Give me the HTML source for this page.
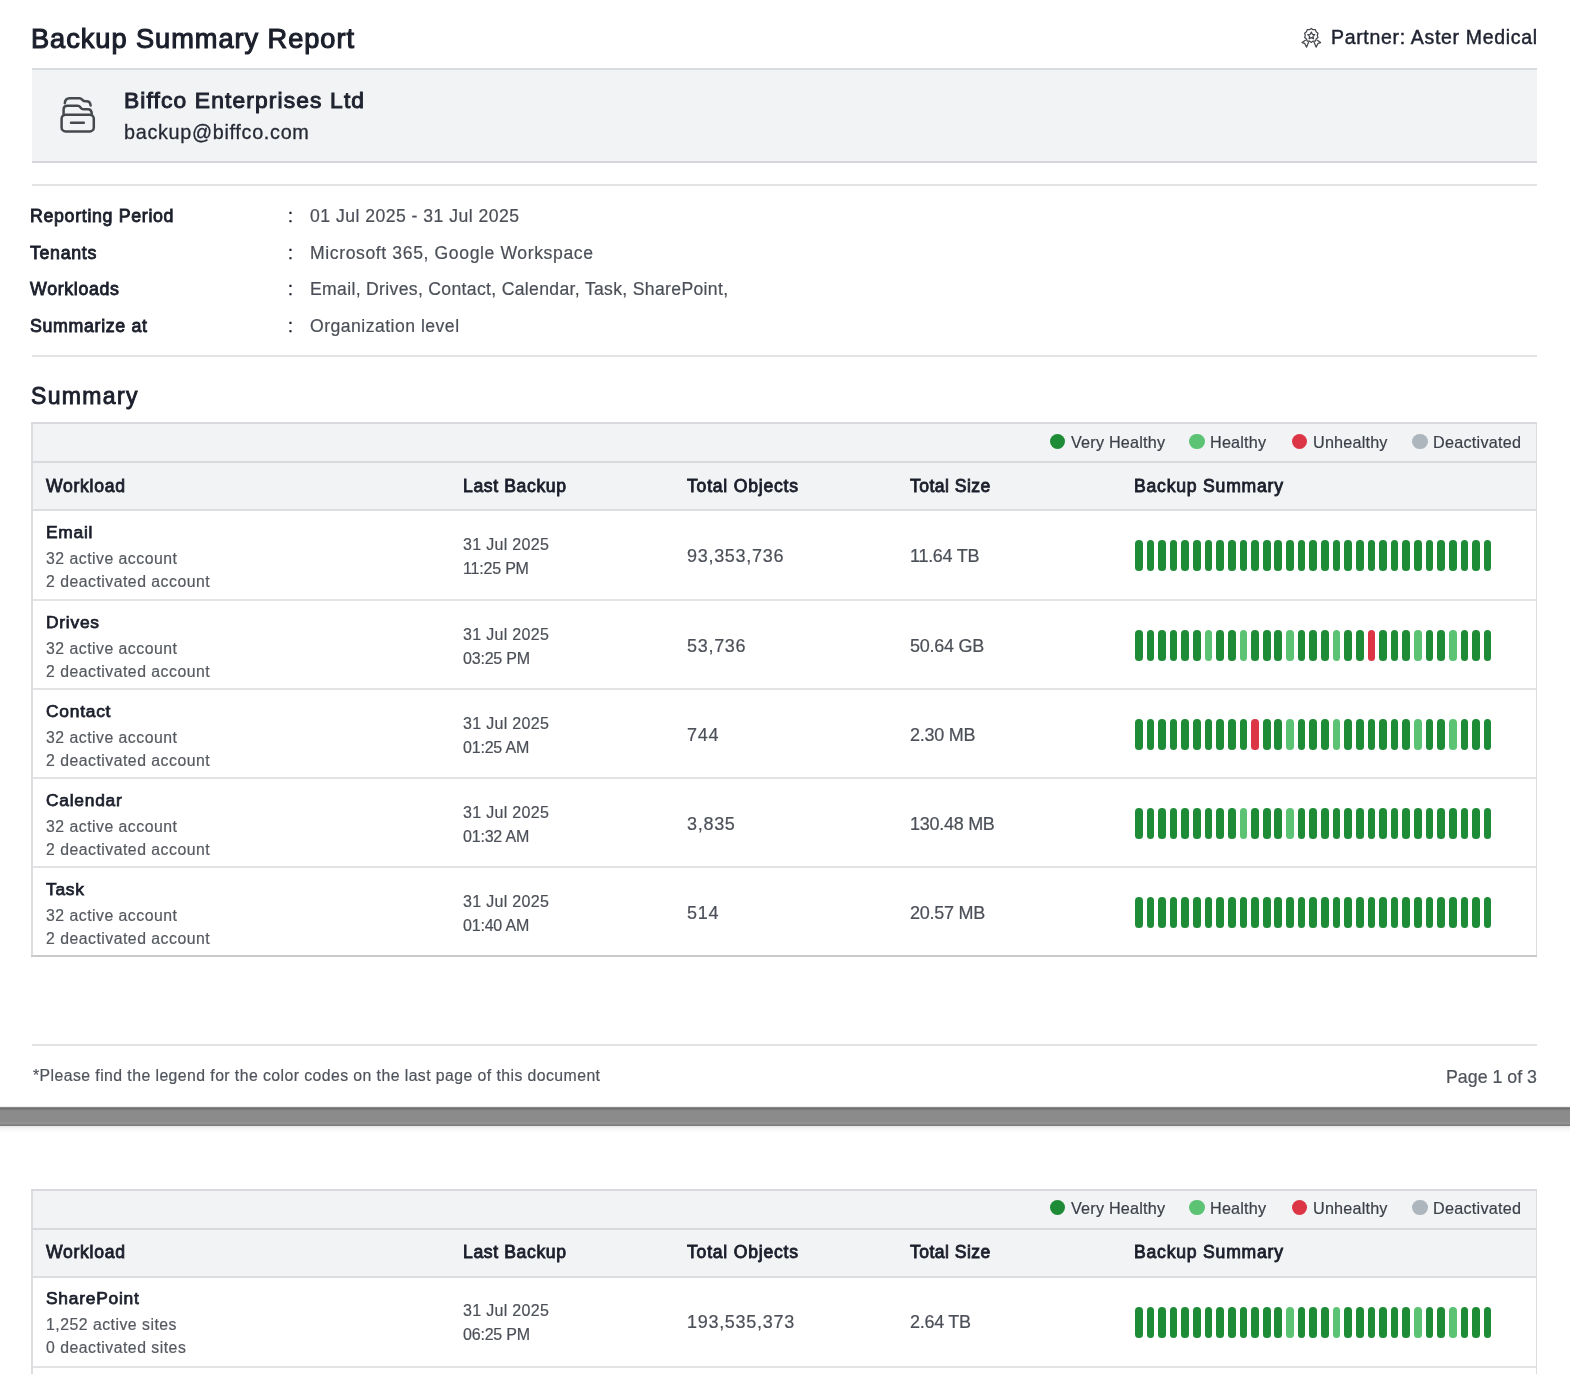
<!DOCTYPE html>
<html><head><meta charset="utf-8"><style>
html,body{margin:0;padding:0;background:#fff;width:1570px;height:1374px;overflow:hidden;position:relative;}
body{font-family:"Liberation Sans",sans-serif;}
.t{position:absolute;white-space:nowrap;will-change:transform;}
.bar{position:absolute;width:7.7px;height:30.5px;border-radius:3.85px;}
</style></head><body>
<div class="t" style="top:23px;font-size:27.20px;line-height:31px;color:#1b1f2b;letter-spacing:0.964px;-webkit-text-stroke:1.10px #1b1f2b;left:30.90px;">Backup Summary Report</div>
<svg style="position:absolute;left:1300px;top:26px" width="24" height="24" viewBox="0 0 24 24" fill="none" stroke="#45484d" stroke-width="1.25" stroke-linejoin="round" stroke-linecap="round">
<path d="M11.30 2.40 L13.15 3.69 L15.41 3.74 L16.15 5.87 L17.96 7.24 L17.30 9.40 L17.96 11.56 L16.15 12.93 L15.41 15.06 L13.15 15.11 L11.30 16.40 L9.45 15.11 L7.19 15.06 L6.45 12.93 L4.64 11.56 L5.30 9.40 L4.64 7.24 L6.45 5.87 L7.19 3.74 L9.45 3.69 Z"/><path d="M11.30 6.10 L12.36 8.34 L14.82 8.66 L13.01 10.36 L13.47 12.79 L11.30 11.60 L9.13 12.79 L9.59 10.36 L7.78 8.66 L10.24 8.34 Z"/>
<path d="M5.4 14.3 L2.1 16.6 L4.6 17.3 L6.6 21.1 L8.6 16.2"/>
<path d="M17.3 14.3 L20.6 16.6 L18.1 17.3 L16.1 21.1 L14.1 16.2"/>
</svg>
<div class="t" style="top:26px;font-size:19.50px;line-height:22px;color:#1f2330;letter-spacing:0.674px;-webkit-text-stroke:0.45px #1f2330;right:32.33px;">Partner: Aster Medical</div>
<div style="position:absolute;left:32.00px;top:68.00px;width:1505.00px;height:95.00px;background:#f2f3f5;border-top:2px solid #dadbde;border-bottom:2px solid #d6d7da;box-sizing:border-box;"></div>
<svg style="position:absolute;left:52px;top:88px" width="52" height="52" viewBox="0 0 52 52" fill="none" stroke="#45484d" stroke-width="2.5" stroke-linejoin="round" stroke-linecap="round">
<rect x="9.6" y="26.7" width="32.2" height="16.7" rx="4"/>
<path d="M11.6 26.5 V21.5 Q11.6 17.8 15.5 17.8 H25.5 Q27.3 17.8 28.4 19.3 L29.3 20.3 Q30.3 21.3 32 21.3 H36 Q39.6 21.3 39.8 26"/>
<path d="M12.8 15.2 Q13.2 10.2 17.5 10.2 H27.4 Q29 10.2 30 11.5 L30.8 12.3 Q31.8 13.2 33.4 13.2 H34.5 Q38.2 13.2 38.6 17.5"/>
<path d="M19 34.8 H31.8"/>
</svg>
<div class="t" style="top:87px;font-size:22.80px;line-height:26px;color:#1f2330;letter-spacing:1.133px;-webkit-text-stroke:1.00px #1f2330;left:123.90px;">Biffco Enterprises Ltd</div>
<div class="t" style="top:121px;font-size:19.80px;line-height:22px;color:#262a35;letter-spacing:0.697px;-webkit-text-stroke:0.30px #262a35;left:123.90px;">backup@biffco.com</div>
<div style="position:absolute;left:32.00px;top:184.00px;width:1505.00px;height:2.00px;background:#e3e3e5;"></div>
<div class="t" style="top:206px;font-size:17.80px;line-height:20px;color:#1b1f2b;letter-spacing:0.668px;-webkit-text-stroke:0.85px #1b1f2b;left:30.40px;">Reporting Period</div>
<div class="t" style="top:206px;font-size:17.80px;line-height:20px;color:#1b1f2b;letter-spacing:0.000px;-webkit-text-stroke:0.30px #1b1f2b;left:287.90px;">:</div>
<div class="t" style="top:206px;font-size:17.60px;line-height:20px;color:#4b4f57;letter-spacing:0.477px;-webkit-text-stroke:0.20px #4b4f57;left:309.70px;">01 Jul 2025 - 31 Jul 2025</div>
<div class="t" style="top:243px;font-size:17.80px;line-height:20px;color:#1b1f2b;letter-spacing:0.668px;-webkit-text-stroke:0.85px #1b1f2b;left:30.40px;">Tenants</div>
<div class="t" style="top:243px;font-size:17.80px;line-height:20px;color:#1b1f2b;letter-spacing:0.000px;-webkit-text-stroke:0.30px #1b1f2b;left:287.90px;">:</div>
<div class="t" style="top:243px;font-size:17.60px;line-height:20px;color:#4b4f57;letter-spacing:0.611px;-webkit-text-stroke:0.20px #4b4f57;left:309.70px;">Microsoft 365, Google Workspace</div>
<div class="t" style="top:279px;font-size:17.80px;line-height:20px;color:#1b1f2b;letter-spacing:0.668px;-webkit-text-stroke:0.85px #1b1f2b;left:30.40px;">Workloads</div>
<div class="t" style="top:279px;font-size:17.80px;line-height:20px;color:#1b1f2b;letter-spacing:0.000px;-webkit-text-stroke:0.30px #1b1f2b;left:287.90px;">:</div>
<div class="t" style="top:279px;font-size:17.60px;line-height:20px;color:#4b4f57;letter-spacing:0.329px;-webkit-text-stroke:0.20px #4b4f57;left:309.70px;">Email, Drives, Contact, Calendar, Task, SharePoint,</div>
<div class="t" style="top:316px;font-size:17.80px;line-height:20px;color:#1b1f2b;letter-spacing:0.668px;-webkit-text-stroke:0.85px #1b1f2b;left:30.40px;">Summarize at</div>
<div class="t" style="top:316px;font-size:17.80px;line-height:20px;color:#1b1f2b;letter-spacing:0.000px;-webkit-text-stroke:0.30px #1b1f2b;left:287.90px;">:</div>
<div class="t" style="top:316px;font-size:17.60px;line-height:20px;color:#4b4f57;letter-spacing:0.483px;-webkit-text-stroke:0.20px #4b4f57;left:309.70px;">Organization level</div>
<div style="position:absolute;left:32.00px;top:355.00px;width:1505.00px;height:1.50px;background:#e3e3e5;"></div>
<div class="t" style="top:383px;font-size:23.00px;line-height:26px;color:#1b1f2b;letter-spacing:1.349px;-webkit-text-stroke:0.90px #1b1f2b;left:30.60px;">Summary</div>
<div style="position:absolute;left:31.00px;top:422.00px;width:1506.00px;height:535.00px;background:#fff;"></div>
<div style="position:absolute;left:31.00px;top:422.00px;width:1.50px;height:535.00px;background:#dcdde0;"></div>
<div style="position:absolute;left:1535.50px;top:422.00px;width:1.50px;height:535.00px;background:#dcdde0;"></div>
<div style="position:absolute;left:32.50px;top:424.00px;width:1503.00px;height:85.00px;background:#f2f3f5;"></div>
<div style="position:absolute;left:31.00px;top:422.00px;width:1506.00px;height:2.00px;background:#d8d9dc;"></div>
<div style="position:absolute;left:31.00px;top:461.00px;width:1506.00px;height:2.00px;background:#d9dadd;"></div>
<div style="position:absolute;left:31.00px;top:509.00px;width:1506.00px;height:2.00px;background:#dcdde0;"></div>
<div style="position:absolute;left:1049.6px;top:433.6px;width:15.5px;height:15.5px;border-radius:50%;background:#1e8b36"></div>
<div class="t" style="top:433px;font-size:16.20px;line-height:18px;color:#3b3f48;letter-spacing:0.203px;-webkit-text-stroke:0.20px #3b3f48;left:1070.70px;">Very Healthy</div>
<div style="position:absolute;left:1189.2px;top:433.6px;width:15.5px;height:15.5px;border-radius:50%;background:#5cc374"></div>
<div class="t" style="top:433px;font-size:16.20px;line-height:18px;color:#3b3f48;letter-spacing:0.188px;-webkit-text-stroke:0.20px #3b3f48;left:1210.10px;">Healthy</div>
<div style="position:absolute;left:1291.9px;top:433.6px;width:15.5px;height:15.5px;border-radius:50%;background:#dc3545"></div>
<div class="t" style="top:433px;font-size:16.20px;line-height:18px;color:#3b3f48;letter-spacing:0.191px;-webkit-text-stroke:0.20px #3b3f48;left:1312.80px;">Unhealthy</div>
<div style="position:absolute;left:1412.1px;top:433.6px;width:15.5px;height:15.5px;border-radius:50%;background:#adb5bd"></div>
<div class="t" style="top:433px;font-size:16.20px;line-height:18px;color:#3b3f48;letter-spacing:0.253px;-webkit-text-stroke:0.20px #3b3f48;left:1432.90px;">Deactivated</div>
<div class="t" style="top:476px;font-size:17.60px;line-height:20px;color:#1b1f2b;letter-spacing:0.717px;-webkit-text-stroke:0.85px #1b1f2b;left:46.20px;">Workload</div>
<div class="t" style="top:476px;font-size:17.60px;line-height:20px;color:#1b1f2b;letter-spacing:0.619px;-webkit-text-stroke:0.85px #1b1f2b;left:463.10px;">Last Backup</div>
<div class="t" style="top:476px;font-size:17.60px;line-height:20px;color:#1b1f2b;letter-spacing:0.776px;-webkit-text-stroke:0.85px #1b1f2b;left:686.60px;">Total Objects</div>
<div class="t" style="top:476px;font-size:17.60px;line-height:20px;color:#1b1f2b;letter-spacing:0.459px;-webkit-text-stroke:0.85px #1b1f2b;left:910.30px;">Total Size</div>
<div class="t" style="top:476px;font-size:17.60px;line-height:20px;color:#1b1f2b;letter-spacing:0.782px;-webkit-text-stroke:0.85px #1b1f2b;left:1133.90px;">Backup Summary</div>
<div class="t" style="top:522px;font-size:17.40px;line-height:20px;color:#1b1f2b;letter-spacing:0.750px;-webkit-text-stroke:0.75px #1b1f2b;left:46.20px;">Email</div>
<div class="t" style="top:550px;font-size:15.80px;line-height:17px;color:#55595f;letter-spacing:0.497px;-webkit-text-stroke:0.20px #55595f;left:46.20px;">32 active account</div>
<div class="t" style="top:573px;font-size:15.80px;line-height:17px;color:#55595f;letter-spacing:0.497px;-webkit-text-stroke:0.20px #55595f;left:46.20px;">2 deactivated account</div>
<div class="t" style="top:536px;font-size:16.00px;line-height:17px;color:#4b4f57;letter-spacing:0.319px;-webkit-text-stroke:0.20px #4b4f57;left:463.40px;">31 Jul 2025</div>
<div class="t" style="top:560px;font-size:16.00px;line-height:17px;color:#4b4f57;letter-spacing:-0.192px;-webkit-text-stroke:0.20px #4b4f57;left:463.40px;">11:25 PM</div>
<div class="t" style="top:546px;font-size:18.00px;line-height:20px;color:#4b4f57;letter-spacing:0.708px;-webkit-text-stroke:0.20px #4b4f57;left:686.90px;">93,353,736</div>
<div class="t" style="top:546px;font-size:18.00px;line-height:20px;color:#4b4f57;letter-spacing:-0.272px;-webkit-text-stroke:0.20px #4b4f57;left:910.40px;">11.64 TB</div>
<div class="bar" style="left:1134.90px;top:540.00px;background:#1e8b36"></div>
<div class="bar" style="left:1146.53px;top:540.00px;background:#1e8b36"></div>
<div class="bar" style="left:1158.16px;top:540.00px;background:#1e8b36"></div>
<div class="bar" style="left:1169.79px;top:540.00px;background:#1e8b36"></div>
<div class="bar" style="left:1181.42px;top:540.00px;background:#1e8b36"></div>
<div class="bar" style="left:1193.05px;top:540.00px;background:#1e8b36"></div>
<div class="bar" style="left:1204.68px;top:540.00px;background:#1e8b36"></div>
<div class="bar" style="left:1216.31px;top:540.00px;background:#1e8b36"></div>
<div class="bar" style="left:1227.94px;top:540.00px;background:#1e8b36"></div>
<div class="bar" style="left:1239.57px;top:540.00px;background:#1e8b36"></div>
<div class="bar" style="left:1251.20px;top:540.00px;background:#1e8b36"></div>
<div class="bar" style="left:1262.83px;top:540.00px;background:#1e8b36"></div>
<div class="bar" style="left:1274.46px;top:540.00px;background:#1e8b36"></div>
<div class="bar" style="left:1286.09px;top:540.00px;background:#1e8b36"></div>
<div class="bar" style="left:1297.72px;top:540.00px;background:#1e8b36"></div>
<div class="bar" style="left:1309.35px;top:540.00px;background:#1e8b36"></div>
<div class="bar" style="left:1320.98px;top:540.00px;background:#1e8b36"></div>
<div class="bar" style="left:1332.61px;top:540.00px;background:#1e8b36"></div>
<div class="bar" style="left:1344.24px;top:540.00px;background:#1e8b36"></div>
<div class="bar" style="left:1355.87px;top:540.00px;background:#1e8b36"></div>
<div class="bar" style="left:1367.50px;top:540.00px;background:#1e8b36"></div>
<div class="bar" style="left:1379.13px;top:540.00px;background:#1e8b36"></div>
<div class="bar" style="left:1390.76px;top:540.00px;background:#1e8b36"></div>
<div class="bar" style="left:1402.39px;top:540.00px;background:#1e8b36"></div>
<div class="bar" style="left:1414.02px;top:540.00px;background:#1e8b36"></div>
<div class="bar" style="left:1425.65px;top:540.00px;background:#1e8b36"></div>
<div class="bar" style="left:1437.28px;top:540.00px;background:#1e8b36"></div>
<div class="bar" style="left:1448.91px;top:540.00px;background:#1e8b36"></div>
<div class="bar" style="left:1460.54px;top:540.00px;background:#1e8b36"></div>
<div class="bar" style="left:1472.17px;top:540.00px;background:#1e8b36"></div>
<div class="bar" style="left:1483.80px;top:540.00px;background:#1e8b36"></div>
<div style="position:absolute;left:32.50px;top:599.00px;width:1503.00px;height:2.00px;background:#e2e3e5;"></div>
<div class="t" style="top:612px;font-size:17.40px;line-height:20px;color:#1b1f2b;letter-spacing:0.750px;-webkit-text-stroke:0.75px #1b1f2b;left:46.20px;">Drives</div>
<div class="t" style="top:640px;font-size:15.80px;line-height:17px;color:#55595f;letter-spacing:0.497px;-webkit-text-stroke:0.20px #55595f;left:46.20px;">32 active account</div>
<div class="t" style="top:663px;font-size:15.80px;line-height:17px;color:#55595f;letter-spacing:0.497px;-webkit-text-stroke:0.20px #55595f;left:46.20px;">2 deactivated account</div>
<div class="t" style="top:626px;font-size:16.00px;line-height:17px;color:#4b4f57;letter-spacing:0.319px;-webkit-text-stroke:0.20px #4b4f57;left:463.40px;">31 Jul 2025</div>
<div class="t" style="top:650px;font-size:16.00px;line-height:17px;color:#4b4f57;letter-spacing:-0.192px;-webkit-text-stroke:0.20px #4b4f57;left:463.40px;">03:25 PM</div>
<div class="t" style="top:636px;font-size:18.00px;line-height:20px;color:#4b4f57;letter-spacing:0.708px;-webkit-text-stroke:0.20px #4b4f57;left:686.90px;">53,736</div>
<div class="t" style="top:636px;font-size:18.00px;line-height:20px;color:#4b4f57;letter-spacing:-0.272px;-webkit-text-stroke:0.20px #4b4f57;left:910.40px;">50.64 GB</div>
<div class="bar" style="left:1134.90px;top:630.00px;background:#1e8b36"></div>
<div class="bar" style="left:1146.53px;top:630.00px;background:#1e8b36"></div>
<div class="bar" style="left:1158.16px;top:630.00px;background:#1e8b36"></div>
<div class="bar" style="left:1169.79px;top:630.00px;background:#1e8b36"></div>
<div class="bar" style="left:1181.42px;top:630.00px;background:#1e8b36"></div>
<div class="bar" style="left:1193.05px;top:630.00px;background:#1e8b36"></div>
<div class="bar" style="left:1204.68px;top:630.00px;background:#5cc374"></div>
<div class="bar" style="left:1216.31px;top:630.00px;background:#1e8b36"></div>
<div class="bar" style="left:1227.94px;top:630.00px;background:#1e8b36"></div>
<div class="bar" style="left:1239.57px;top:630.00px;background:#5cc374"></div>
<div class="bar" style="left:1251.20px;top:630.00px;background:#1e8b36"></div>
<div class="bar" style="left:1262.83px;top:630.00px;background:#1e8b36"></div>
<div class="bar" style="left:1274.46px;top:630.00px;background:#1e8b36"></div>
<div class="bar" style="left:1286.09px;top:630.00px;background:#5cc374"></div>
<div class="bar" style="left:1297.72px;top:630.00px;background:#1e8b36"></div>
<div class="bar" style="left:1309.35px;top:630.00px;background:#1e8b36"></div>
<div class="bar" style="left:1320.98px;top:630.00px;background:#1e8b36"></div>
<div class="bar" style="left:1332.61px;top:630.00px;background:#5cc374"></div>
<div class="bar" style="left:1344.24px;top:630.00px;background:#1e8b36"></div>
<div class="bar" style="left:1355.87px;top:630.00px;background:#1e8b36"></div>
<div class="bar" style="left:1367.50px;top:630.00px;background:#dc3545"></div>
<div class="bar" style="left:1379.13px;top:630.00px;background:#1e8b36"></div>
<div class="bar" style="left:1390.76px;top:630.00px;background:#1e8b36"></div>
<div class="bar" style="left:1402.39px;top:630.00px;background:#1e8b36"></div>
<div class="bar" style="left:1414.02px;top:630.00px;background:#5cc374"></div>
<div class="bar" style="left:1425.65px;top:630.00px;background:#1e8b36"></div>
<div class="bar" style="left:1437.28px;top:630.00px;background:#1e8b36"></div>
<div class="bar" style="left:1448.91px;top:630.00px;background:#5cc374"></div>
<div class="bar" style="left:1460.54px;top:630.00px;background:#1e8b36"></div>
<div class="bar" style="left:1472.17px;top:630.00px;background:#1e8b36"></div>
<div class="bar" style="left:1483.80px;top:630.00px;background:#1e8b36"></div>
<div style="position:absolute;left:32.50px;top:688.00px;width:1503.00px;height:2.00px;background:#e2e3e5;"></div>
<div class="t" style="top:701px;font-size:17.40px;line-height:20px;color:#1b1f2b;letter-spacing:0.750px;-webkit-text-stroke:0.75px #1b1f2b;left:46.20px;">Contact</div>
<div class="t" style="top:729px;font-size:15.80px;line-height:17px;color:#55595f;letter-spacing:0.497px;-webkit-text-stroke:0.20px #55595f;left:46.20px;">32 active account</div>
<div class="t" style="top:752px;font-size:15.80px;line-height:17px;color:#55595f;letter-spacing:0.497px;-webkit-text-stroke:0.20px #55595f;left:46.20px;">2 deactivated account</div>
<div class="t" style="top:715px;font-size:16.00px;line-height:17px;color:#4b4f57;letter-spacing:0.319px;-webkit-text-stroke:0.20px #4b4f57;left:463.40px;">31 Jul 2025</div>
<div class="t" style="top:739px;font-size:16.00px;line-height:17px;color:#4b4f57;letter-spacing:-0.192px;-webkit-text-stroke:0.20px #4b4f57;left:463.40px;">01:25 AM</div>
<div class="t" style="top:725px;font-size:18.00px;line-height:20px;color:#4b4f57;letter-spacing:0.708px;-webkit-text-stroke:0.20px #4b4f57;left:686.90px;">744</div>
<div class="t" style="top:725px;font-size:18.00px;line-height:20px;color:#4b4f57;letter-spacing:-0.272px;-webkit-text-stroke:0.20px #4b4f57;left:910.40px;">2.30 MB</div>
<div class="bar" style="left:1134.90px;top:719.00px;background:#1e8b36"></div>
<div class="bar" style="left:1146.53px;top:719.00px;background:#1e8b36"></div>
<div class="bar" style="left:1158.16px;top:719.00px;background:#1e8b36"></div>
<div class="bar" style="left:1169.79px;top:719.00px;background:#1e8b36"></div>
<div class="bar" style="left:1181.42px;top:719.00px;background:#1e8b36"></div>
<div class="bar" style="left:1193.05px;top:719.00px;background:#1e8b36"></div>
<div class="bar" style="left:1204.68px;top:719.00px;background:#1e8b36"></div>
<div class="bar" style="left:1216.31px;top:719.00px;background:#1e8b36"></div>
<div class="bar" style="left:1227.94px;top:719.00px;background:#1e8b36"></div>
<div class="bar" style="left:1239.57px;top:719.00px;background:#1e8b36"></div>
<div class="bar" style="left:1251.20px;top:719.00px;background:#dc3545"></div>
<div class="bar" style="left:1262.83px;top:719.00px;background:#1e8b36"></div>
<div class="bar" style="left:1274.46px;top:719.00px;background:#1e8b36"></div>
<div class="bar" style="left:1286.09px;top:719.00px;background:#5cc374"></div>
<div class="bar" style="left:1297.72px;top:719.00px;background:#1e8b36"></div>
<div class="bar" style="left:1309.35px;top:719.00px;background:#1e8b36"></div>
<div class="bar" style="left:1320.98px;top:719.00px;background:#1e8b36"></div>
<div class="bar" style="left:1332.61px;top:719.00px;background:#5cc374"></div>
<div class="bar" style="left:1344.24px;top:719.00px;background:#1e8b36"></div>
<div class="bar" style="left:1355.87px;top:719.00px;background:#1e8b36"></div>
<div class="bar" style="left:1367.50px;top:719.00px;background:#1e8b36"></div>
<div class="bar" style="left:1379.13px;top:719.00px;background:#1e8b36"></div>
<div class="bar" style="left:1390.76px;top:719.00px;background:#1e8b36"></div>
<div class="bar" style="left:1402.39px;top:719.00px;background:#1e8b36"></div>
<div class="bar" style="left:1414.02px;top:719.00px;background:#5cc374"></div>
<div class="bar" style="left:1425.65px;top:719.00px;background:#1e8b36"></div>
<div class="bar" style="left:1437.28px;top:719.00px;background:#1e8b36"></div>
<div class="bar" style="left:1448.91px;top:719.00px;background:#5cc374"></div>
<div class="bar" style="left:1460.54px;top:719.00px;background:#1e8b36"></div>
<div class="bar" style="left:1472.17px;top:719.00px;background:#1e8b36"></div>
<div class="bar" style="left:1483.80px;top:719.00px;background:#1e8b36"></div>
<div style="position:absolute;left:32.50px;top:777.00px;width:1503.00px;height:2.00px;background:#e2e3e5;"></div>
<div class="t" style="top:790px;font-size:17.40px;line-height:20px;color:#1b1f2b;letter-spacing:0.750px;-webkit-text-stroke:0.75px #1b1f2b;left:46.20px;">Calendar</div>
<div class="t" style="top:818px;font-size:15.80px;line-height:17px;color:#55595f;letter-spacing:0.497px;-webkit-text-stroke:0.20px #55595f;left:46.20px;">32 active account</div>
<div class="t" style="top:841px;font-size:15.80px;line-height:17px;color:#55595f;letter-spacing:0.497px;-webkit-text-stroke:0.20px #55595f;left:46.20px;">2 deactivated account</div>
<div class="t" style="top:804px;font-size:16.00px;line-height:17px;color:#4b4f57;letter-spacing:0.319px;-webkit-text-stroke:0.20px #4b4f57;left:463.40px;">31 Jul 2025</div>
<div class="t" style="top:828px;font-size:16.00px;line-height:17px;color:#4b4f57;letter-spacing:-0.192px;-webkit-text-stroke:0.20px #4b4f57;left:463.40px;">01:32 AM</div>
<div class="t" style="top:814px;font-size:18.00px;line-height:20px;color:#4b4f57;letter-spacing:0.708px;-webkit-text-stroke:0.20px #4b4f57;left:686.90px;">3,835</div>
<div class="t" style="top:814px;font-size:18.00px;line-height:20px;color:#4b4f57;letter-spacing:-0.272px;-webkit-text-stroke:0.20px #4b4f57;left:910.40px;">130.48 MB</div>
<div class="bar" style="left:1134.90px;top:808.00px;background:#1e8b36"></div>
<div class="bar" style="left:1146.53px;top:808.00px;background:#1e8b36"></div>
<div class="bar" style="left:1158.16px;top:808.00px;background:#1e8b36"></div>
<div class="bar" style="left:1169.79px;top:808.00px;background:#1e8b36"></div>
<div class="bar" style="left:1181.42px;top:808.00px;background:#1e8b36"></div>
<div class="bar" style="left:1193.05px;top:808.00px;background:#1e8b36"></div>
<div class="bar" style="left:1204.68px;top:808.00px;background:#1e8b36"></div>
<div class="bar" style="left:1216.31px;top:808.00px;background:#1e8b36"></div>
<div class="bar" style="left:1227.94px;top:808.00px;background:#1e8b36"></div>
<div class="bar" style="left:1239.57px;top:808.00px;background:#5cc374"></div>
<div class="bar" style="left:1251.20px;top:808.00px;background:#1e8b36"></div>
<div class="bar" style="left:1262.83px;top:808.00px;background:#1e8b36"></div>
<div class="bar" style="left:1274.46px;top:808.00px;background:#1e8b36"></div>
<div class="bar" style="left:1286.09px;top:808.00px;background:#5cc374"></div>
<div class="bar" style="left:1297.72px;top:808.00px;background:#1e8b36"></div>
<div class="bar" style="left:1309.35px;top:808.00px;background:#1e8b36"></div>
<div class="bar" style="left:1320.98px;top:808.00px;background:#1e8b36"></div>
<div class="bar" style="left:1332.61px;top:808.00px;background:#1e8b36"></div>
<div class="bar" style="left:1344.24px;top:808.00px;background:#1e8b36"></div>
<div class="bar" style="left:1355.87px;top:808.00px;background:#1e8b36"></div>
<div class="bar" style="left:1367.50px;top:808.00px;background:#1e8b36"></div>
<div class="bar" style="left:1379.13px;top:808.00px;background:#1e8b36"></div>
<div class="bar" style="left:1390.76px;top:808.00px;background:#1e8b36"></div>
<div class="bar" style="left:1402.39px;top:808.00px;background:#1e8b36"></div>
<div class="bar" style="left:1414.02px;top:808.00px;background:#1e8b36"></div>
<div class="bar" style="left:1425.65px;top:808.00px;background:#1e8b36"></div>
<div class="bar" style="left:1437.28px;top:808.00px;background:#1e8b36"></div>
<div class="bar" style="left:1448.91px;top:808.00px;background:#1e8b36"></div>
<div class="bar" style="left:1460.54px;top:808.00px;background:#1e8b36"></div>
<div class="bar" style="left:1472.17px;top:808.00px;background:#1e8b36"></div>
<div class="bar" style="left:1483.80px;top:808.00px;background:#1e8b36"></div>
<div style="position:absolute;left:32.50px;top:866.00px;width:1503.00px;height:2.00px;background:#e2e3e5;"></div>
<div class="t" style="top:879px;font-size:17.40px;line-height:20px;color:#1b1f2b;letter-spacing:0.750px;-webkit-text-stroke:0.75px #1b1f2b;left:46.20px;">Task</div>
<div class="t" style="top:907px;font-size:15.80px;line-height:17px;color:#55595f;letter-spacing:0.497px;-webkit-text-stroke:0.20px #55595f;left:46.20px;">32 active account</div>
<div class="t" style="top:930px;font-size:15.80px;line-height:17px;color:#55595f;letter-spacing:0.497px;-webkit-text-stroke:0.20px #55595f;left:46.20px;">2 deactivated account</div>
<div class="t" style="top:893px;font-size:16.00px;line-height:17px;color:#4b4f57;letter-spacing:0.319px;-webkit-text-stroke:0.20px #4b4f57;left:463.40px;">31 Jul 2025</div>
<div class="t" style="top:917px;font-size:16.00px;line-height:17px;color:#4b4f57;letter-spacing:-0.192px;-webkit-text-stroke:0.20px #4b4f57;left:463.40px;">01:40 AM</div>
<div class="t" style="top:903px;font-size:18.00px;line-height:20px;color:#4b4f57;letter-spacing:0.708px;-webkit-text-stroke:0.20px #4b4f57;left:686.90px;">514</div>
<div class="t" style="top:903px;font-size:18.00px;line-height:20px;color:#4b4f57;letter-spacing:-0.272px;-webkit-text-stroke:0.20px #4b4f57;left:910.40px;">20.57 MB</div>
<div class="bar" style="left:1134.90px;top:897.00px;background:#1e8b36"></div>
<div class="bar" style="left:1146.53px;top:897.00px;background:#1e8b36"></div>
<div class="bar" style="left:1158.16px;top:897.00px;background:#1e8b36"></div>
<div class="bar" style="left:1169.79px;top:897.00px;background:#1e8b36"></div>
<div class="bar" style="left:1181.42px;top:897.00px;background:#1e8b36"></div>
<div class="bar" style="left:1193.05px;top:897.00px;background:#1e8b36"></div>
<div class="bar" style="left:1204.68px;top:897.00px;background:#1e8b36"></div>
<div class="bar" style="left:1216.31px;top:897.00px;background:#1e8b36"></div>
<div class="bar" style="left:1227.94px;top:897.00px;background:#1e8b36"></div>
<div class="bar" style="left:1239.57px;top:897.00px;background:#1e8b36"></div>
<div class="bar" style="left:1251.20px;top:897.00px;background:#1e8b36"></div>
<div class="bar" style="left:1262.83px;top:897.00px;background:#1e8b36"></div>
<div class="bar" style="left:1274.46px;top:897.00px;background:#1e8b36"></div>
<div class="bar" style="left:1286.09px;top:897.00px;background:#1e8b36"></div>
<div class="bar" style="left:1297.72px;top:897.00px;background:#1e8b36"></div>
<div class="bar" style="left:1309.35px;top:897.00px;background:#1e8b36"></div>
<div class="bar" style="left:1320.98px;top:897.00px;background:#1e8b36"></div>
<div class="bar" style="left:1332.61px;top:897.00px;background:#1e8b36"></div>
<div class="bar" style="left:1344.24px;top:897.00px;background:#1e8b36"></div>
<div class="bar" style="left:1355.87px;top:897.00px;background:#1e8b36"></div>
<div class="bar" style="left:1367.50px;top:897.00px;background:#1e8b36"></div>
<div class="bar" style="left:1379.13px;top:897.00px;background:#1e8b36"></div>
<div class="bar" style="left:1390.76px;top:897.00px;background:#1e8b36"></div>
<div class="bar" style="left:1402.39px;top:897.00px;background:#1e8b36"></div>
<div class="bar" style="left:1414.02px;top:897.00px;background:#1e8b36"></div>
<div class="bar" style="left:1425.65px;top:897.00px;background:#1e8b36"></div>
<div class="bar" style="left:1437.28px;top:897.00px;background:#1e8b36"></div>
<div class="bar" style="left:1448.91px;top:897.00px;background:#1e8b36"></div>
<div class="bar" style="left:1460.54px;top:897.00px;background:#1e8b36"></div>
<div class="bar" style="left:1472.17px;top:897.00px;background:#1e8b36"></div>
<div class="bar" style="left:1483.80px;top:897.00px;background:#1e8b36"></div>
<div style="position:absolute;left:31.00px;top:955.00px;width:1506.00px;height:2.00px;background:#c9cacc;"></div>
<div style="position:absolute;left:32.00px;top:1044.00px;width:1505.00px;height:2.00px;background:#e3e3e5;"></div>
<div class="t" style="top:1067px;font-size:15.80px;line-height:17px;color:#4f535b;letter-spacing:0.435px;-webkit-text-stroke:0.20px #4f535b;left:32.70px;">*Please find the legend for the color codes on the last page of this document</div>
<div class="t" style="top:1067px;font-size:17.80px;line-height:20px;color:#4f535b;letter-spacing:0.003px;-webkit-text-stroke:0.20px #4f535b;right:33.40px;">Page 1 of 3</div>
<div style="position:absolute;left:0;top:1106px;width:1570px;height:26px;background:linear-gradient(to bottom,#f0f0f0 0px,#f0f0f0 1px,#8a8a8a 1.5px,#6f6f6f 2.5px,#7e7e7e 3.5px,#8b8b8b 5px,#8b8b8b 16px,#989898 17px,#848484 18.5px,#7e7e7e 19.5px,#e8e8e8 20.5px,#f5f5f5 22px,#fcfcfc 26px);"></div>
<div style="position:absolute;left:31.00px;top:1189.00px;width:1506.00px;height:185.00px;background:#fff;"></div>
<div style="position:absolute;left:31.00px;top:1189.00px;width:1.50px;height:185.00px;background:#dcdde0;"></div>
<div style="position:absolute;left:1535.50px;top:1189.00px;width:1.50px;height:185.00px;background:#dcdde0;"></div>
<div style="position:absolute;left:32.50px;top:1191.00px;width:1503.00px;height:85.00px;background:#f2f3f5;"></div>
<div style="position:absolute;left:31.00px;top:1189.00px;width:1506.00px;height:2.00px;background:#d8d9dc;"></div>
<div style="position:absolute;left:31.00px;top:1228.00px;width:1506.00px;height:2.00px;background:#d9dadd;"></div>
<div style="position:absolute;left:31.00px;top:1276.00px;width:1506.00px;height:2.00px;background:#dcdde0;"></div>
<div style="position:absolute;left:1049.6px;top:1199.7px;width:15.5px;height:15.5px;border-radius:50%;background:#1e8b36"></div>
<div class="t" style="top:1199px;font-size:16.20px;line-height:18px;color:#3b3f48;letter-spacing:0.203px;-webkit-text-stroke:0.20px #3b3f48;left:1070.70px;">Very Healthy</div>
<div style="position:absolute;left:1189.2px;top:1199.7px;width:15.5px;height:15.5px;border-radius:50%;background:#5cc374"></div>
<div class="t" style="top:1199px;font-size:16.20px;line-height:18px;color:#3b3f48;letter-spacing:0.188px;-webkit-text-stroke:0.20px #3b3f48;left:1210.10px;">Healthy</div>
<div style="position:absolute;left:1291.9px;top:1199.7px;width:15.5px;height:15.5px;border-radius:50%;background:#dc3545"></div>
<div class="t" style="top:1199px;font-size:16.20px;line-height:18px;color:#3b3f48;letter-spacing:0.191px;-webkit-text-stroke:0.20px #3b3f48;left:1312.80px;">Unhealthy</div>
<div style="position:absolute;left:1412.1px;top:1199.7px;width:15.5px;height:15.5px;border-radius:50%;background:#adb5bd"></div>
<div class="t" style="top:1199px;font-size:16.20px;line-height:18px;color:#3b3f48;letter-spacing:0.253px;-webkit-text-stroke:0.20px #3b3f48;left:1432.90px;">Deactivated</div>
<div class="t" style="top:1242px;font-size:17.60px;line-height:20px;color:#1b1f2b;letter-spacing:0.717px;-webkit-text-stroke:0.85px #1b1f2b;left:46.20px;">Workload</div>
<div class="t" style="top:1242px;font-size:17.60px;line-height:20px;color:#1b1f2b;letter-spacing:0.619px;-webkit-text-stroke:0.85px #1b1f2b;left:463.10px;">Last Backup</div>
<div class="t" style="top:1242px;font-size:17.60px;line-height:20px;color:#1b1f2b;letter-spacing:0.776px;-webkit-text-stroke:0.85px #1b1f2b;left:686.60px;">Total Objects</div>
<div class="t" style="top:1242px;font-size:17.60px;line-height:20px;color:#1b1f2b;letter-spacing:0.459px;-webkit-text-stroke:0.85px #1b1f2b;left:910.30px;">Total Size</div>
<div class="t" style="top:1242px;font-size:17.60px;line-height:20px;color:#1b1f2b;letter-spacing:0.782px;-webkit-text-stroke:0.85px #1b1f2b;left:1133.90px;">Backup Summary</div>
<div class="t" style="top:1288px;font-size:17.40px;line-height:20px;color:#1b1f2b;letter-spacing:0.750px;-webkit-text-stroke:0.75px #1b1f2b;left:46.20px;">SharePoint</div>
<div class="t" style="top:1316px;font-size:15.80px;line-height:17px;color:#55595f;letter-spacing:0.497px;-webkit-text-stroke:0.20px #55595f;left:46.20px;">1,252 active sites</div>
<div class="t" style="top:1339px;font-size:15.80px;line-height:17px;color:#55595f;letter-spacing:0.497px;-webkit-text-stroke:0.20px #55595f;left:46.20px;">0 deactivated sites</div>
<div class="t" style="top:1302px;font-size:16.00px;line-height:17px;color:#4b4f57;letter-spacing:0.319px;-webkit-text-stroke:0.20px #4b4f57;left:463.40px;">31 Jul 2025</div>
<div class="t" style="top:1326px;font-size:16.00px;line-height:17px;color:#4b4f57;letter-spacing:-0.192px;-webkit-text-stroke:0.20px #4b4f57;left:463.40px;">06:25 PM</div>
<div class="t" style="top:1312px;font-size:18.00px;line-height:20px;color:#4b4f57;letter-spacing:0.708px;-webkit-text-stroke:0.20px #4b4f57;left:686.90px;">193,535,373</div>
<div class="t" style="top:1312px;font-size:18.00px;line-height:20px;color:#4b4f57;letter-spacing:-0.272px;-webkit-text-stroke:0.20px #4b4f57;left:910.40px;">2.64 TB</div>
<div class="bar" style="left:1134.90px;top:1307.00px;background:#1e8b36"></div>
<div class="bar" style="left:1146.53px;top:1307.00px;background:#1e8b36"></div>
<div class="bar" style="left:1158.16px;top:1307.00px;background:#1e8b36"></div>
<div class="bar" style="left:1169.79px;top:1307.00px;background:#1e8b36"></div>
<div class="bar" style="left:1181.42px;top:1307.00px;background:#1e8b36"></div>
<div class="bar" style="left:1193.05px;top:1307.00px;background:#1e8b36"></div>
<div class="bar" style="left:1204.68px;top:1307.00px;background:#1e8b36"></div>
<div class="bar" style="left:1216.31px;top:1307.00px;background:#1e8b36"></div>
<div class="bar" style="left:1227.94px;top:1307.00px;background:#1e8b36"></div>
<div class="bar" style="left:1239.57px;top:1307.00px;background:#1e8b36"></div>
<div class="bar" style="left:1251.20px;top:1307.00px;background:#1e8b36"></div>
<div class="bar" style="left:1262.83px;top:1307.00px;background:#1e8b36"></div>
<div class="bar" style="left:1274.46px;top:1307.00px;background:#1e8b36"></div>
<div class="bar" style="left:1286.09px;top:1307.00px;background:#5cc374"></div>
<div class="bar" style="left:1297.72px;top:1307.00px;background:#1e8b36"></div>
<div class="bar" style="left:1309.35px;top:1307.00px;background:#1e8b36"></div>
<div class="bar" style="left:1320.98px;top:1307.00px;background:#1e8b36"></div>
<div class="bar" style="left:1332.61px;top:1307.00px;background:#5cc374"></div>
<div class="bar" style="left:1344.24px;top:1307.00px;background:#1e8b36"></div>
<div class="bar" style="left:1355.87px;top:1307.00px;background:#1e8b36"></div>
<div class="bar" style="left:1367.50px;top:1307.00px;background:#1e8b36"></div>
<div class="bar" style="left:1379.13px;top:1307.00px;background:#1e8b36"></div>
<div class="bar" style="left:1390.76px;top:1307.00px;background:#1e8b36"></div>
<div class="bar" style="left:1402.39px;top:1307.00px;background:#1e8b36"></div>
<div class="bar" style="left:1414.02px;top:1307.00px;background:#5cc374"></div>
<div class="bar" style="left:1425.65px;top:1307.00px;background:#1e8b36"></div>
<div class="bar" style="left:1437.28px;top:1307.00px;background:#1e8b36"></div>
<div class="bar" style="left:1448.91px;top:1307.00px;background:#5cc374"></div>
<div class="bar" style="left:1460.54px;top:1307.00px;background:#1e8b36"></div>
<div class="bar" style="left:1472.17px;top:1307.00px;background:#1e8b36"></div>
<div class="bar" style="left:1483.80px;top:1307.00px;background:#1e8b36"></div>
<div style="position:absolute;left:32.50px;top:1366.00px;width:1503.00px;height:2.00px;background:#e2e3e5;"></div>
</body></html>
